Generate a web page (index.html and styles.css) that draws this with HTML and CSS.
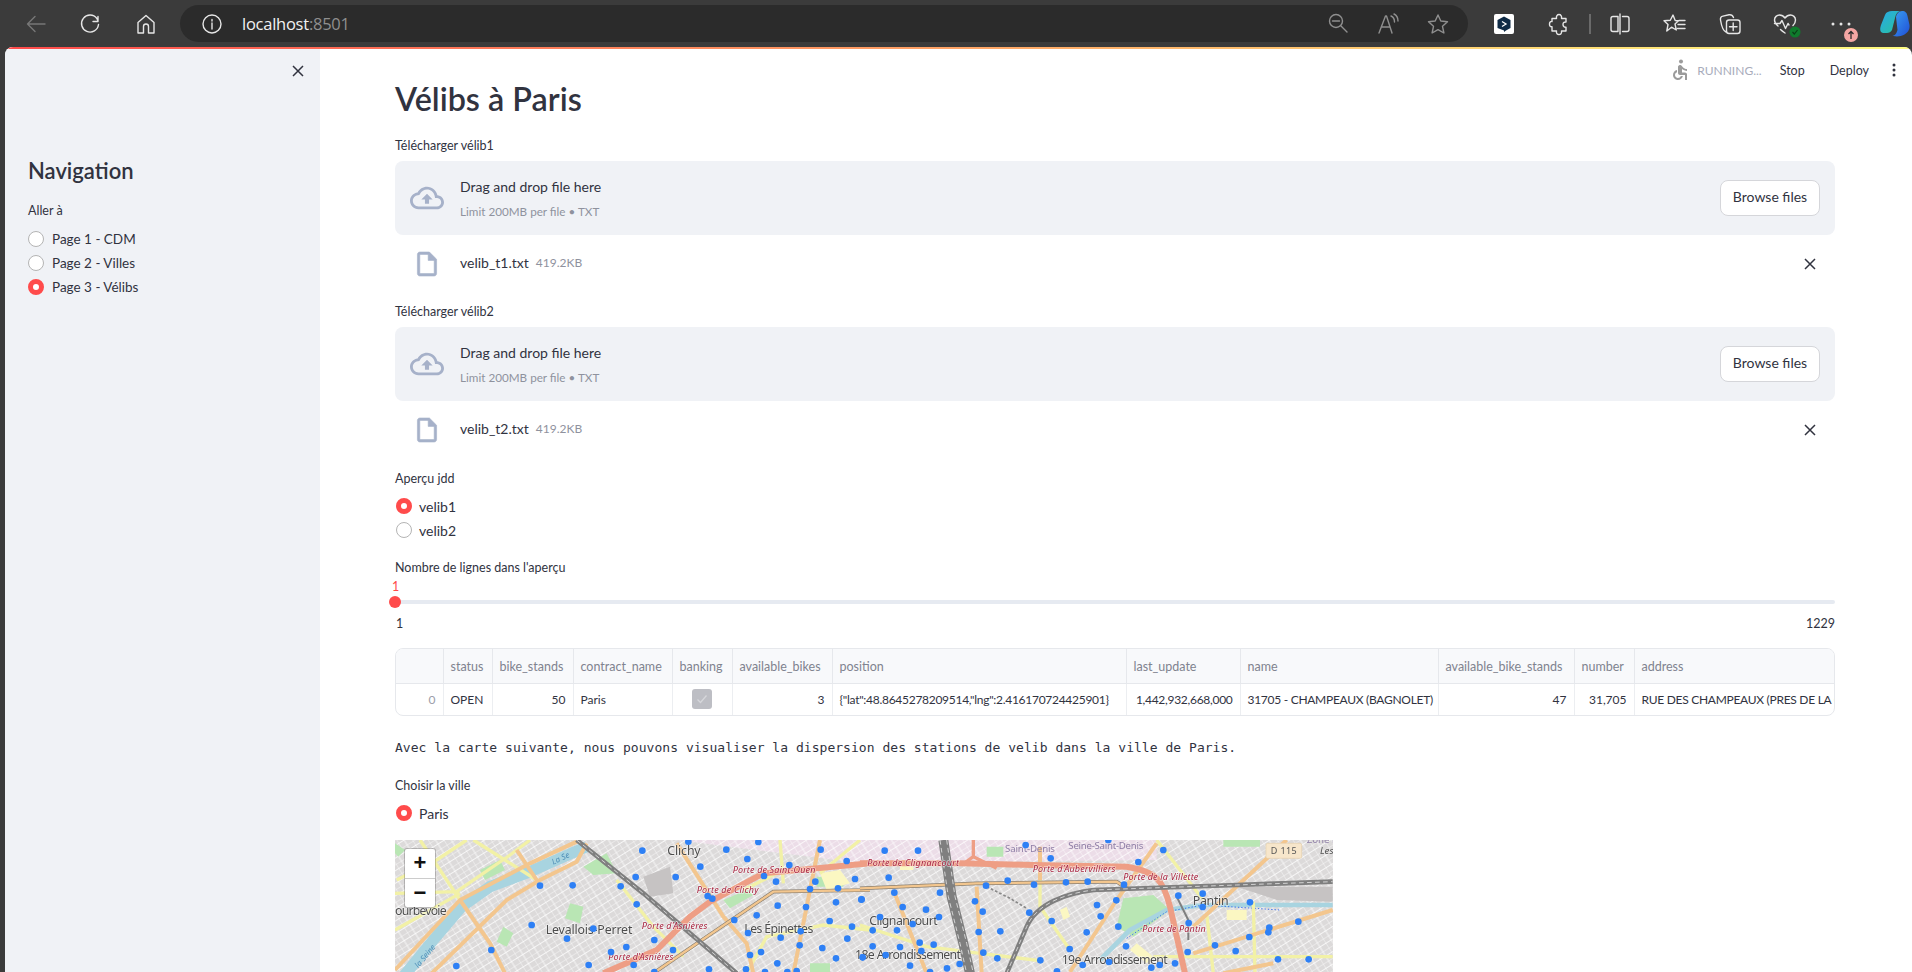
FILE: index.html
```html
<!DOCTYPE html>
<html lang="fr">
<head>
<meta charset="utf-8">
<title>Vélibs à Paris</title>
<link rel="stylesheet" href="styles.css">
</head>
<body>
<header class="browser">
  <span class="slot"><svg width="24" height="24" viewBox="0 0 24 24" class="ic dim"><path d="M21 12H3.500M11 4.500 3.500 12l7.500 7.500"/></svg></span>
  <span class="slot"><svg width="24" height="24" viewBox="0 0 24 24" class="ic"><path d="M19 4.500V9.500H14M19.500 12.500A8.500 8.500 0 1 1 17.900 6.500L19 9"/></svg></span>
  <span class="slot"><svg width="24" height="24" viewBox="0 0 24 24" class="ic"><path d="M4 10.500 12 3.500l8 7V21h-5.500v-6.500a2.500 2.500 0 0 0-5 0V21H4z"/></svg></span>
  <div class="pill">
    <svg width="22" height="22" viewBox="0 0 22 22" class="ic info"><circle cx="11" cy="11" r="9"/><path d="M11 10v6M11 6.500v1.500"/></svg>
    <span class="host">localhost<span class="port">:8501</span></span>
    <span class="pill-icons">
      <span class="slot-s"><svg width="22" height="22" viewBox="0 0 22 22" class="ic grey"><circle cx="9" cy="9" r="6.500"/><path d="M5.500 9h7M14 14l6 6"/></svg></span>
      <span class="slot-s"><svg width="24" height="24" viewBox="0 0 24 24" class="ic grey"><path d="M3 21 9.500 4h1L16 21M5.500 15h8.500M15 4c2.500 1 3.500 3 3.500 6M18 2c3 1.500 4 3.500 4 7"/></svg></span>
      <span class="slot-s"><svg width="24" height="24" viewBox="0 0 24 24" class="ic grey"><path d="m12 3 2.800 6 6.700.8-5 4.500 1.400 6.700-5.900-3.400L6.100 21l1.400-6.700-5-4.500 6.700-.8z"/></svg></span>
    </span>
  </div>
  <div class="tools">
    <span class="slot"><svg width="20" height="20" viewBox="0 0 20 20"><rect width="20" height="20" rx="2" class="deepl-bg"/><path d="M10 2.500 16.500 6v8l-4.500 2.500-2 1.500V16.500L3.500 14V6z" class="deepl-hex"/><path d="M8 7.500 12 10l-4 2.500" class="deepl-mark"/></svg></span>
    <span class="slot"><svg width="24" height="24" viewBox="0 0 24 24" class="ic"><path d="M9.500 6.500C9 4 10.300 2.500 12 2.500s3 1.500 2.500 4H19v3.500c-2-.3-3 1-3 2.500s1 3 3 2.800V19h-4.500c.5 2.500-1 3.500-2.500 3.500S9 21.500 9.500 19H5v-4.200C3 15 2.500 13.500 2.500 12S3.500 9 5 9.500V6.500z"/></svg></span>
    <span class="sep"></span>
    <span class="slot"><svg width="24" height="24" viewBox="0 0 24 24" class="ic"><path d="M10 4.500H5a2 2 0 0 0-2 2v11a2 2 0 0 0 2 2h5zM12 2v20M14.500 4.500H19a2 2 0 0 1 2 2v11a2 2 0 0 1-2 2h-4.500"/></svg></span>
    <span class="slot"><svg width="24" height="24" viewBox="0 0 24 24" class="ic"><path d="m10 3 2.200 5.500 3.300.3-3.500 3.200 1.300 6-4.800-2.800-4.700 3.800 1.200-6.500L1 8.800l6.300-.5zM16 8.500h6M15 12.500h7M14.500 16.500h7.500"/></svg></span>
    <span class="slot"><svg width="24" height="24" viewBox="0 0 24 24" class="ic"><path d="M8 20C5 19 3.500 14 2.500 8c-.3-2 .5-3.500 2.500-3.900l6-1.300c2-.4 3.500.3 4.500 2.700"/><rect x="8.500" y="8" width="13.500" height="13.500" rx="2.500"/><path d="M15.200 11v7.500M11.500 14.700H19"/></svg></span>
    <span class="slot slot-rel"><svg width="24" height="24" viewBox="0 0 24 24" class="ic"><path d="M5 14C3 12.500 1.500 10.500 1.500 8c0-3 2.500-5 5-5 2.200 0 4 1 5.500 3 1.500-2 3.300-3 5.500-3 2.500 0 5 2 5 5 0 2-1 4-2.500 5.500M1.500 11.500H7l2-3 3.500 8 2.500-5 1 1.500M12 21c-1.500-1-3-2-4.500-3.500"/></svg><svg class="mini-check" width="12" height="12" viewBox="0 0 12 12"><circle cx="6" cy="6" r="5.500" class="badge-green"/><path d="M3.500 6 5.300 8 8.500 4" class="ok"/></svg></span>
    <span class="slot slot-rel"><svg width="24" height="6" viewBox="0 0 24 6"><circle cx="5" cy="3" r="1.500" class="fill-w"/><circle cx="13" cy="3" r="1.500" class="fill-w"/><circle cx="21" cy="3" r="1.500" class="fill-w"/></svg><svg class="mini-up" width="14" height="14" viewBox="0 0 14 14"><circle cx="7" cy="7" r="7" class="rose"/><path d="M7 11V3.500M4.500 6 7 3.500 9.500 6" class="up"/></svg></span>
    <span class="slot"><svg width="30" height="30" viewBox="0 0 30 30"><defs><linearGradient id="cpa" x1="0" y1="0" x2="1" y2="1"><stop offset="0" stop-color="#2aa8e8"/><stop offset="1" stop-color="#28c49c"/></linearGradient><linearGradient id="cpb" x1="0" y1="0" x2="1" y2="1"><stop offset="0" stop-color="#3aa0f0"/><stop offset="1" stop-color="#2050d8"/></linearGradient></defs><path d="M12 2h8c-3 1-4 3-5 7l-3 12c-1 2-3 3-5 3H3C0 24-.5 20 1 16l4-10c1-3 4-4 7-4z" fill="url(#cpa)"/><path d="M16 8c.5-3 3-6 6-6 3.500 0 5 2 5.500 5l2 9c.5 5-2 8-6 10-2 1-6 2-10 1h-1c3-.5 4-3 5-6z" fill="url(#cpb)"/></svg></span>
  </div>
</header>

<div class="app">
  <aside class="sidebar">
    <div class="side-close"><svg width="12" height="12" viewBox="0 0 12 12" class="x"><path d="M1 1l10 10M11 1 1 11"/></svg></div>
    <h2 class="side-title">Navigation</h2>
    <p class="label side-label">Aller à</p>
    <div class="radio-row"><span class="radio"></span>Page 1 - CDM</div>
    <div class="radio-row"><span class="radio"></span>Page 2 - Villes</div>
    <div class="radio-row"><span class="radio on"></span>Page 3 - Vélibs</div>
  </aside>

  <main class="main">
    <div class="topbar">
      <svg width="24" height="24" viewBox="0 0 24 24" class="wheel"><circle cx="14" cy="3.500" r="2"/><path d="M20 13v-2c-1.540.02-3.090-.75-4.070-1.830l-1.290-1.430c-.17-.19-.38-.34-.61-.45-.01 0-.01-.01-.02-.01H14c-.35-.2-.75-.3-1.190-.26C11.760 7.110 11 8.040 11 9.090V15c0 1.100.9 2 2 2h5v5h2v-5.500c0-1.100-.9-2-2-2h-3v-3.450c1.290 1.070 3.250 1.940 5 1.950zm-6.170 5c-.41 1.160-1.520 2-2.830 2-1.660 0-3-1.340-3-3 0-1.310.84-2.410 2-2.830V12.100c-2.280.46-4 2.480-4 4.900 0 2.760 2.240 5 5 5 2.420 0 4.440-1.720 4.900-4h-2.070z"/></svg>
      <span class="running">RUNNING...</span>
      <span class="top-btn stop">Stop</span>
      <span class="top-btn deploy">Deploy</span>
      <svg width="4" height="14" viewBox="0 0 4 14" class="kebab"><circle cx="2" cy="2" r="1.500"/><circle cx="2" cy="7" r="1.500"/><circle cx="2" cy="12" r="1.500"/></svg>
    </div>

    <h1 class="title">Vélibs à Paris</h1>

    <section class="uploader">
      <p class="label up-label">Télécharger vélib1</p>
      <div class="drop">
        <svg width="34" height="34" viewBox="0 0 24 24" class="glyph"><path d="M19.350 10.040C18.670 6.590 15.640 4 12 4 9.110 4 6.600 5.640 5.350 8.040 2.340 8.360 0 10.910 0 14c0 3.310 2.690 6 6 6h13c2.760 0 5-2.240 5-5 0-2.640-2.050-4.780-4.650-4.960zM19 18H6c-2.210 0-4-1.790-4-4 0-2.050 1.530-3.760 3.560-3.970l1.070-.11.5-.95C8.080 7.140 9.940 6 12 6c2.620 0 4.880 1.860 5.390 4.430l.3 1.500 1.530.11c1.560.1 2.780 1.410 2.780 2.960 0 1.650-1.350 3-3 3zM8 13h2.550v3h2.900v-3H16l-4-4z"/></svg>
        <div class="drop-text"><div class="drop-main">Drag and drop file here</div><div class="drop-sub">Limit 200MB per file • TXT</div></div>
        <span class="browse">Browse files</span>
      </div>
      <div class="file-row">
        <svg width="24" height="28" viewBox="2 1 20 22" class="glyph file-ic"><path d="M14 2H6c-1.100 0-1.990.9-1.990 2L4 20c0 1.100.89 2 1.990 2H18c1.100 0 2-.9 2-2V8l-6-6zM6 20V4h7v5h5v11H6z"/></svg>
        <span class="file-name">velib_t1.txt</span><span class="file-size">419.2KB</span>
        <svg width="12" height="12" viewBox="0 0 12 12" class="x file-x"><path d="M1 1l10 10M11 1 1 11"/></svg>
      </div>
    </section>

    <section class="uploader">
      <p class="label up-label">Télécharger vélib2</p>
      <div class="drop">
        <svg width="34" height="34" viewBox="0 0 24 24" class="glyph"><path d="M19.350 10.040C18.670 6.590 15.640 4 12 4 9.110 4 6.600 5.640 5.350 8.040 2.340 8.360 0 10.910 0 14c0 3.310 2.690 6 6 6h13c2.760 0 5-2.240 5-5 0-2.640-2.050-4.780-4.650-4.960zM19 18H6c-2.210 0-4-1.790-4-4 0-2.050 1.530-3.760 3.560-3.970l1.070-.11.5-.95C8.080 7.140 9.940 6 12 6c2.620 0 4.880 1.860 5.390 4.430l.3 1.500 1.530.11c1.560.1 2.780 1.410 2.780 2.960 0 1.650-1.350 3-3 3zM8 13h2.550v3h2.900v-3H16l-4-4z"/></svg>
        <div class="drop-text"><div class="drop-main">Drag and drop file here</div><div class="drop-sub">Limit 200MB per file • TXT</div></div>
        <span class="browse">Browse files</span>
      </div>
      <div class="file-row">
        <svg width="24" height="28" viewBox="2 1 20 22" class="glyph file-ic"><path d="M14 2H6c-1.100 0-1.990.9-1.990 2L4 20c0 1.100.89 2 1.990 2H18c1.100 0 2-.9 2-2V8l-6-6zM6 20V4h7v5h5v11H6z"/></svg>
        <span class="file-name">velib_t2.txt</span><span class="file-size">419.2KB</span>
        <svg width="12" height="12" viewBox="0 0 12 12" class="x file-x"><path d="M1 1l10 10M11 1 1 11"/></svg>
      </div>
    </section>

    <section class="preview">
      <p class="label up-label">Aperçu jdd</p>
      <div class="radio-row main-radio"><span class="radio on"></span>velib1</div>
      <div class="radio-row main-radio"><span class="radio"></span>velib2</div>
    </section>

    <section class="slider">
      <p class="label">Nombre de lignes dans l'aperçu</p>
      <div class="slider-val">1</div>
      <div class="track"><span class="thumb"></span></div>
      <div class="slider-ends"><span>1</span><span>1229</span></div>
    </section>

    <div class="table-wrap">
      <table class="data">
        <colgroup>
          <col class="c0"><col class="c1"><col class="c2"><col class="c3"><col class="c4"><col class="c5"><col class="c6"><col class="c7"><col class="c8"><col class="c9"><col class="c10"><col class="c11">
        </colgroup>
        <thead>
          <tr><th></th><th>status</th><th>bike_stands</th><th>contract_name</th><th>banking</th><th>available_bikes</th><th>position</th><th>last_update</th><th>name</th><th>available_bike_stands</th><th>number</th><th>address</th></tr>
        </thead>
        <tbody>
          <tr>
            <td class="idx">0</td><td>OPEN</td><td class="num">50</td><td>Paris</td>
            <td class="center"><span class="check"><svg width="14" height="14" viewBox="0 0 14 14"><path d="M2.500 7.500 5.500 10.500 11.500 3.500"/></svg></span></td>
            <td class="num">3</td><td class="tight">{"lat":48.8645278209514,"lng":2.416170724425901}</td><td class="num tight">1,442,932,668,000</td><td class="tight">31705 - CHAMPEAUX (BAGNOLET)</td><td class="num">47</td><td class="num">31,705</td><td class="tight">RUE DES CHAMPEAUX (PRES DE LA GARE ROUTIERE)</td>
          </tr>
        </tbody>
      </table>
    </div>

    <p class="mono">Avec la carte suivante, nous pouvons visualiser la dispersion des stations de velib dans la ville de Paris.</p>

    <section class="city">
      <p class="label city-label">Choisir la ville</p>
      <div class="radio-row main-radio"><span class="radio on"></span>Paris</div>
    </section>

    <div class="map">
      <svg class="map-svg" width="938" height="132" viewBox="0 0 938 132">
        <defs>
          <pattern id="streets" width="40" height="32" patternUnits="userSpaceOnUse" patternTransform="rotate(-32)">
            <path d="M0 0H40M0 16H40M0 0V32M20 0V32" class="street"/>
          </pattern>
          <filter id="soft"><feGaussianBlur stdDeviation="0.5"/></filter>
          <filter id="softer"><feGaussianBlur stdDeviation="0.22"/></filter>
        </defs>
        <g filter="url(#soft)">
          <g transform="translate(-5 -10) scale(.33333)">
            <rect x="15" y="30" width="2850" height="400" class="land"/>
            <path d="M1300 30H1440V70L1340 80z" class="pink"/>
            <path d="M860 30H2300V90L1400 100 1300 85z" class="pink"/>
            <rect x="15" y="30" width="2850" height="400" fill="url(#streets)"/>
            <path d="M580 110 650 70 680 130 610 135zM540 220l40 10-10 50-45-15zM340 290l30 20-20 40-30-15zM270 120l60-30 15 30-60 30zM1000 210l70-30 20 15-70 40zM1280 140h80v30h-80zM1260 400h60v30h-60zM15 40l30 20-20 20-10-10z" class="park"/>
            <path d="M1290 130l60-10 30 40-70 20z" class="pale"/>
            <path d="M40 440 130 330 215 230 300 170 420 125 590 50" class="seine"/>
            <path d="M760 140 840 110 850 190 780 200z" class="grey-zone"/>
            <path d="M20 150 140 90 230 30M15 190 200 185 360 75 420 30M90 30 210 210M250 30 440 150M15 300 210 190M680 150 790 290 880 380M1070 430 1130 320 1300 285 1440 300M1060 180 1180 120M1170 30 1180 160M1410 30 1290 130" class="yellow"/>
            <path d="M15 420 210 210 420 100 560 35M125 430 350 210 450 150 560 95 590 40M210 210 300 340 345 430M380 60 440 150M860 40 1000 260 1070 340 1090 430M1290 30 1260 180 1210 430" class="orange"/>
            <path d="M790 430 950 320 1150 185 1440 180" class="ring"/>
            <path d="M790 430 950 320 1150 185 1440 180" class="ring-in"/>
            <path d="M640 430 800 360 900 260 960 215 1120 130 1440 100" class="peri"/>
            <path d="M560 30 760 190 900 310 1040 430" class="rail"/>
            <path d="M560 30 760 190 900 310 1040 430" class="rail-dash"/>
          </g>
          <g transform="translate(465 -10) scale(.33333)">
            <path d="M380 50h50v30h-50zM1090 30h110v20h-110z" class="park"/>
            <path d="M790 205 880 195 930 240 820 320 770 290z" class="park"/>
            <path d="M120 90h40v30h-40zM830 340l50 40-20 20-50-40zM1100 240h60v30h-60zM600 240l20-10 10 30-20 10z" class="pale"/>
            <path d="M1130 170H1418V215L1250 210z" class="grey-zone"/>
            <path d="M720 390 810 300 920 240 1030 225 1418 225" class="seine thin"/>
            <path d="M800 325 920 245 1030 225 1260 240" class="dotted"/>
            <path d="M0 285 200 350 360 370 540 392M540 130V230L630 360M890 30 1030 210M1180 215 1185 430M1040 250 1060 430M880 380 1418 380" class="yellow"/>
            <path d="M100 180 200 430M350 170 365 430M540 50V150M630 426 770 210 890 40M1000 370 1418 240M1000 290 1280 30M1090 430 1240 400" class="orange"/>
            <path d="M0 175 350 160 770 155 800 175" class="ring"/>
            <path d="M0 175 350 160 770 155 800 175" class="ring-in"/>
            <path d="M0 100H300L520 105 800 110C890 125 910 150 930 230L975 430" class="peri"/>
            <path d="M340 30V80L305 105M340 30V80L410 115" class="peri thin-peri"/>
            <path d="M250 30 275 200 310 340 330 430" class="rail wide"/>
            <path d="M240 30 265 200 300 340 320 430M260 30 285 200 320 340 340 430" class="rail-dash"/>
            <path d="M440 430 500 290C530 220 620 190 700 180L1130 165 1418 155" class="rail"/>
            <path d="M440 430 500 290C530 220 620 190 700 180L1130 165 1418 155" class="rail-dash"/>
            <path d="M380 170 450 205 500 235" class="dashed"/>
            <path d="M950 200 985 270V330" class="rail thin-rail"/>
          </g>
        </g>
        <g filter="url(#softer)">
        <g transform="translate(-5 -10) scale(.33333)">
          <text x="832" y="75" textLength="100" class="town">Clichy</text>
          <text x="15" y="255" textLength="155" class="town">ourbevoie</text>
          <text x="467" y="313" textLength="260" class="town">Levallois-Perret</text>
          <text x="1063" y="310" textLength="207" class="town">Les Épinettes</text>
          <text x="1028" y="128" textLength="248" class="gate">Porte de Saint-Ouen</text>
          <text x="920" y="189" textLength="185" class="gate">Porte de Clichy</text>
          <text x="755" y="297" textLength="197" class="gate">Porte d'Asnières</text>
          <text x="655" y="391" textLength="195" class="gate">Porte d'Asnières</text>
          <text x="490" y="104" class="water" transform="rotate(-25 490 104)">La Se</text>
          <text x="85" y="415" class="water" transform="rotate(-50 85 415)">la Seine</text>
          <g class="dots"><circle cx="757" cy="62"/><circle cx="895" cy="35"/><circle cx="1009" cy="59"/><circle cx="1105" cy="36"/><circle cx="1292" cy="59"/><circle cx="1072" cy="87"/><circle cx="931" cy="110"/><circle cx="1198" cy="105"/><circle cx="1370" cy="93"/><circle cx="450" cy="167"/><circle cx="548" cy="166"/><circle cx="692" cy="169"/><circle cx="737" cy="141"/><circle cx="857" cy="141"/><circle cx="1122" cy="138"/><circle cx="1158" cy="155"/><circle cx="1276" cy="155"/><circle cx="1395" cy="147"/><circle cx="1260" cy="177"/><circle cx="1344" cy="175"/><circle cx="953" cy="198"/><circle cx="967" cy="206"/><circle cx="740" cy="223"/><circle cx="1163" cy="227"/><circle cx="1248" cy="231"/><circle cx="1338" cy="217"/><circle cx="1414" cy="209"/><circle cx="1100" cy="256"/><circle cx="1033" cy="270"/><circle cx="1319" cy="273"/><circle cx="1386" cy="290"/><circle cx="425" cy="285"/><circle cx="610" cy="296"/><circle cx="1074" cy="309"/><circle cx="1232" cy="304"/><circle cx="1172" cy="323"/><circle cx="531" cy="326"/><circle cx="793" cy="330"/><circle cx="1372" cy="326"/><circle cx="1229" cy="346"/><circle cx="1297" cy="354"/><circle cx="304" cy="360"/><circle cx="709" cy="351"/><circle cx="849" cy="360"/><circle cx="663" cy="366"/><circle cx="1113" cy="366"/><circle cx="1080" cy="375"/><circle cx="1338" cy="385"/><circle cx="1418" cy="382"/><circle cx="199" cy="408"/><circle cx="596" cy="405"/><circle cx="731" cy="405"/><circle cx="1162" cy="400"/><circle cx="957" cy="418"/><circle cx="1068" cy="418"/><circle cx="793" cy="426"/><circle cx="1125" cy="426"/><circle cx="1192" cy="426"/><circle cx="1220" cy="423"/></g>
        </g>
        <g transform="translate(465 -10) scale(.33333)">
          <text x="435" y="65" textLength="150" class="dept">Saint-Denis</text>
          <text x="625" y="58" textLength="225" class="dept">Seine-Saint-Denis</text>
          <text x="22" y="108" textLength="275" class="gate">Porte de Clignancourt</text>
          <text x="518" y="125" textLength="248" class="gate">Porte d'Aubervilliers</text>
          <text x="790" y="149" textLength="225" class="gate">Porte de la Villette</text>
          <text x="847" y="305" textLength="190" class="gate">Porte de Pantin</text>
          <text x="998" y="225" textLength="108" class="town">Pantin</text>
          <text x="28" y="285" textLength="205" class="town">Clignancourt</text>
          <text x="-15" y="387" textLength="318" class="town">18e Arrondissement</text>
          <text x="605" y="402" textLength="318" class="town">19e Arrondissement</text>
          <rect x="1218" y="40" width="107" height="45" rx="5" class="shield"/>
          <text x="1232" y="72" textLength="78" class="shield-text">D 115</text>
          <text x="1340" y="40" class="dept">Zone i</text>
          <text x="1380" y="72" class="dept it">Les</text>
          <g class="dots"><circle cx="497" cy="45"/><circle cx="745" cy="30"/><circle cx="74" cy="62"/><circle cx="174" cy="62"/><circle cx="572" cy="85"/><circle cx="910" cy="60"/><circle cx="835" cy="96"/><circle cx="86" cy="143"/><circle cx="443" cy="152"/><circle cx="378" cy="167"/><circle cx="522" cy="164"/><circle cx="618" cy="157"/><circle cx="683" cy="155"/><circle cx="792" cy="164"/><circle cx="103" cy="188"/><circle cx="240" cy="188"/><circle cx="5" cy="208"/><circle cx="345" cy="214"/><circle cx="955" cy="197"/><circle cx="1028" cy="191"/><circle cx="769" cy="211"/><circle cx="1170" cy="217"/><circle cx="128" cy="231"/><circle cx="711" cy="225"/><circle cx="1028" cy="231"/><circle cx="198" cy="239"/><circle cx="368" cy="245"/><circle cx="508" cy="248"/><circle cx="60" cy="261"/><circle cx="237" cy="261"/><circle cx="722" cy="259"/><circle cx="575" cy="273"/><circle cx="986" cy="279"/><circle cx="1315" cy="275"/><circle cx="158" cy="282"/><circle cx="775" cy="290"/><circle cx="1228" cy="293"/><circle cx="1225" cy="307"/><circle cx="38" cy="301"/><circle cx="111" cy="301"/><circle cx="356" cy="306"/><circle cx="421" cy="304"/><circle cx="680" cy="307"/><circle cx="1168" cy="321"/><circle cx="179" cy="338"/><circle cx="221" cy="344"/><circle cx="38" cy="349"/><circle cx="120" cy="351"/><circle cx="798" cy="349"/><circle cx="1065" cy="346"/><circle cx="629" cy="357"/><circle cx="184" cy="363"/><circle cx="1127" cy="363"/><circle cx="983" cy="366"/><circle cx="370" cy="368"/><circle cx="8" cy="382"/><circle cx="77" cy="375"/><circle cx="412" cy="385"/><circle cx="541" cy="391"/><circle cx="1254" cy="388"/><circle cx="1346" cy="388"/><circle cx="299" cy="402"/><circle cx="150" cy="407"/><circle cx="261" cy="415"/><circle cx="747" cy="396"/><circle cx="668" cy="405"/><circle cx="899" cy="405"/><circle cx="945" cy="400"/><circle cx="874" cy="413"/><circle cx="591" cy="424"/><circle cx="210" cy="426"/></g>
        </g>
        </g>
      </svg>
      <div class="zoom-ctl">
        <span class="zoom-btn">+</span>
        <span class="zoom-btn">−</span>
      </div>
    </div>
  </main>
</div>
</body>
</html>
```
FILE: styles.css
```css
* { box-sizing: border-box; }
html, body { margin: 0; height: 100%; overflow: hidden; }
body { background: #3b3b3b; font-family: "Lato", "Liberation Sans", sans-serif; color: #31333f; display: flex; flex-direction: column; height: 972px; }
p { margin: 0; }

/* browser chrome */
.browser { height: 47px; flex: none; display: flex; align-items: center; padding-left: 8px; overflow: hidden; }
.slot { flex: none; width: 55px; height: 37px; display: flex; align-items: center; justify-content: center; }
.slot-rel { position: relative; }
.ic { fill: none; stroke: #e6e6e6; stroke-width: 1.4; stroke-linejoin: round; stroke-linecap: round; }
.ic.dim { stroke: #777; }
.ic.grey { stroke: #8f8f8f; }
.pill { flex: none; width: 1288px; height: 37px; margin-left: 7px; border-radius: 19px; background: #2b2b2b; display: flex; align-items: center; padding: 0 5px 0 21px; }
.host { margin-left: 19px; font-family: "Open Sans", sans-serif; font-size: 16.500px; color: #f2f2f2; letter-spacing: -.25px; }
.port { color: #8f8f8f; }
.pill-icons { margin-left: auto; display: flex; }
.slot-s { width: 50px; display: flex; justify-content: center; }
.tools { flex: none; display: flex; align-items: center; margin-left: 8.500px; }
.sep { flex: none; width: 2px; height: 20px; margin: 0 2px; background: #6a6a6a; }
.deepl-bg { fill: #fff; }
.deepl-hex { fill: #0f2b46; }
.deepl-mark { fill: none; stroke: #fff; stroke-width: 1.300; }
.mini-check { position: absolute; left: 31px; top: 21px; }
.badge-green { fill: #0f7b2c; }
.ok { fill: none; stroke: #0b3d18; stroke-width: 1.200; }
.fill-w { fill: #e6e6e6; }
.mini-up { position: absolute; left: 31px; top: 23px; }
.rose { fill: #f4a6a3; }
.up { fill: none; stroke: #2b2b2b; stroke-width: 1.300; }

/* app */
.app { flex: 1; position: relative; display: flex; margin-left: 5px; border-radius: 8px 8px 0 0; overflow: hidden; background: #fff; min-height: 0; }
.app::before { content: ""; position: absolute; left: 0; right: 0; top: 0; height: 2px; z-index: 2; background: linear-gradient(90deg, #ff4b4b, #fffd80); }
.sidebar { flex: none; width: 315px; background: #f0f2f6; padding: 18px 24px 0 23px; }
.side-close { display: flex; justify-content: flex-end; height: 12px; margin-right: -8px; }
.x { fill: none; stroke: #31333f; stroke-width: 1.500; }
.side-title { margin: 79px 0 0; font-size: 22px; line-height: 30px; font-weight: 600; color: #31333f; }
.label { font-size: 12.500px; line-height: 18px; color: #31333f; }
.side-label { margin-top: 16px; margin-bottom: 7px; }
.radio-row { display: flex; align-items: center; height: 24px; font-size: 13.500px; color: #31333f; }
.radio { flex: none; width: 16px; height: 16px; border-radius: 50%; background: #fff; border: 1px solid #b4b4b4; margin-right: 8px; }
.radio.on { border: 5px solid #ff4b4b; background: #fff; }

.main { flex: 1; min-width: 0; position: relative; padding: 30px 77px 0 75px; overflow: hidden; }
.topbar { position: absolute; top: 11px; right: 16px; height: 24px; display: flex; align-items: center; }
.wheel { fill: #9b9b9b; margin-right: 6px; }
.running { font-size: 12px; color: #a8acbb; margin-right: 18px; }
.top-btn { font-size: 12.500px; color: #31333f; }
.stop { margin-right: 25px; }
.deploy { margin-right: 23px; }
.kebab { fill: #31333f; }

.title { margin: 0; height: 44px; font-size: 32.300px; line-height: 44px; font-weight: 600; color: #31333f; }
.uploader { height: 166px; margin-top: 16px; }
.uploader + .uploader { margin-top: 0; }
.up-label { margin-bottom: 6px; }
.drop { height: 74px; background: #f0f2f6; border-radius: 8px; display: flex; align-items: center; padding: 0 15px; }
.glyph { flex: none; fill: #a6b1c9; }
.file-ic { stroke: #a6b1c9; stroke-width: .5; }
.drop-text { margin-left: 16px; flex: 1; }
.drop-main { font-size: 14px; line-height: 22px; }
.drop-sub { font-size: 11.700px; line-height: 18px; margin-top: 4px; color: #8f929e; }
.browse { flex: none; width: 100px; height: 36px; margin-top: -1px; border: 1px solid #d5d6da; border-radius: 8px; background: #fff; display: flex; align-items: center; justify-content: center; font-size: 14px; line-height: 32px; padding-bottom: 1px; }
.file-row { display: flex; align-items: center; height: 28px; margin-top: 15px; padding-left: 20px; }
.file-name { margin-left: 21px; font-size: 14px; margin-top: -3px; }
.file-size { margin-left: 7px; font-size: 12px; color: #8f929e; margin-top: -3px; }
.file-x { margin-left: auto; margin-right: 19px; }

.preview { margin-top: 1px; }
.preview .up-label, .uploader .up-label { margin-bottom: 6px; }
.main-radio { font-size: 14px; }
.main-radio .radio { margin-left: 1px; margin-right: 7px; }
.slider { margin-top: 17px; }
.slider-val { height: 19px; line-height: 19px; font-size: 12.500px; color: #ff4b4b; margin-left: -3px; }
.track { position: relative; height: 4px; margin: 4px 0 4px; background: #e6eaf1; border-radius: 2px; }
.thumb { position: absolute; left: -6px; top: -4px; width: 12px; height: 12px; border-radius: 50%; background: #ff4b4b; }
.slider-ends { display: flex; justify-content: space-between; margin-top: 11px; font-size: 12.500px; line-height: 18px; padding-left: 1px; }

.table-wrap { margin-top: 15px; height: 68px; border: 1px solid #e6e8ec; border-radius: 8px; overflow: hidden; }
.data { width: 1440px; table-layout: fixed; border-collapse: collapse; font-size: 12px; }
.c0 { width: 47px; } .c1 { width: 49px; } .c2 { width: 81px; } .c3 { width: 99px; } .c4 { width: 60px; } .c5 { width: 100px; } .c6 { width: 294px; } .c7 { width: 114px; } .c8 { width: 198px; } .c9 { width: 136px; } .c10 { width: 60px; } .c11 { width: 202px; }
.data th { height: 34px; padding: 2px 7px 0; font-size: 12.500px; background: #f8f9fb; color: #80838f; font-weight: 400; text-align: left; border-right: 1px solid #e6e8ec; border-bottom: 1px solid #e6e8ec; white-space: nowrap; overflow: hidden; }
.data td { height: 32px; padding: 0 7px; border-right: 1px solid #eceef1; white-space: nowrap; overflow: hidden; }
.data .num { text-align: right; }
.data .idx { text-align: right; color: #9a9da8; }
.data .center { text-align: center; padding: 0; }
.data .tight { letter-spacing: -.28px; }
.check { display: inline-flex; width: 20px; height: 20px; align-items: center; justify-content: center; background: #bdbec4; border-radius: 3px; vertical-align: middle; }
.check svg { fill: none; stroke: #d6d7db; stroke-width: 1.300; }

.mono { margin-top: 22px; height: 20px; line-height: 20px; font-family: "DejaVu Sans Mono", monospace; font-size: 13px; letter-spacing: .035px; white-space: nowrap; color: #31333f; }
.city { margin-top: 19px; }
.city-label { margin-bottom: 6px; }
.map { position: relative; width: 938px; height: 132px; margin-top: 15px; overflow: hidden; }
.map-svg { display: block; }
.land { fill: #dcdada; }
.street { fill: none; stroke: #fff; stroke-width: 2.200; }
.pink { fill: #ecdde8; }
.park { fill: #b9e6b4; }
.pale { fill: #fbf7c2; }
.grey-zone { fill: #c6c3c3; }
.seine { fill: none; stroke: #a8d4e0; stroke-width: 34; stroke-linejoin: round; }
.seine.thin { stroke-width: 14; }
.yellow { fill: none; stroke: #f2f1a6; stroke-width: 10; }
.orange { fill: none; stroke: #f3c68e; stroke-width: 12; }
.ring { fill: none; stroke: #8a7f70; stroke-width: 11; }
.ring-in { fill: none; stroke: #f3c68e; stroke-width: 7; }
.peri { fill: none; stroke: #ee9e85; stroke-width: 18; }
.peri.thin-peri { stroke-width: 10; }
.rail { fill: none; stroke: #7f7f7f; stroke-width: 14; }
.rail.wide { stroke-width: 30; }
.rail.thin-rail { stroke-width: 6; }
.rail-dash { fill: none; stroke: #d2d2d2; stroke-width: 3; stroke-dasharray: 14 10; }
.dotted { fill: none; stroke: #3a6ff0; stroke-width: 3; stroke-dasharray: 4 6; }
.dashed { fill: none; stroke: #888; stroke-width: 5; stroke-dasharray: 8 6; }
.town { font-family: "Noto Sans", sans-serif; font-size: 37px; fill: #4d4d4d; stroke: rgba(255,255,255,.55); stroke-width: 4; paint-order: stroke; }
.gate { font-family: "Noto Sans", sans-serif; font-style: italic; font-size: 27px; fill: #a8233f; stroke: rgba(255,255,255,.55); stroke-width: 4; paint-order: stroke; }
.dept { font-family: "Noto Sans", sans-serif; font-size: 29px; fill: #8e7ea6; }
.dept.it { font-style: italic; fill: #555; }
.water { font-family: "Noto Sans", sans-serif; font-style: italic; font-size: 24px; fill: #4f8fb8; }
.shield { fill: #f7e6cb; stroke: #e6d0aa; stroke-width: 2; }
.shield-text { font-family: "Noto Sans", sans-serif; font-size: 27px; fill: #555; }
.dots circle { r: 10px; fill: #2f80f5; }
.zoom-ctl { position: absolute; left: 10px; top: 9px; width: 30px; height: 58px; background: #fff; border-radius: 2px; box-shadow: 0 0 0 1px rgba(0,0,0,.2); display: flex; flex-direction: column; }
.zoom-btn { flex: 1; display: flex; align-items: center; justify-content: center; font-family: "Liberation Sans", sans-serif; font-size: 22px; font-weight: 700; color: #111; }
.zoom-btn + .zoom-btn { border-top: 1px solid #ccc; }
```
